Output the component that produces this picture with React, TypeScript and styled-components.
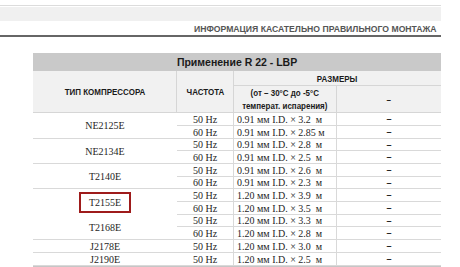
import styled, { createGlobalStyle } from 'styled-components';

const GlobalStyle = createGlobalStyle`
  body {
    margin: 0;
    background: #ffffff;
  }
`;

interface Item {
  freq: string;
  size: string;
}

interface Group {
  model: string;
  items: Item[];
  marked?: boolean;
  open?: boolean;
}

const groups: Group[] = [
  {
    model: 'NE2125E',
    items: [
      { freq: '50 Hz', size: '0.91 мм I.D. × 3.2  м' },
      { freq: '60 Hz', size: '0.91 мм I.D. × 2.85 м' }
    ]
  },
  {
    model: 'NE2134E',
    items: [
      { freq: '50 Hz', size: '0.91 мм I.D. × 2.8  м' },
      { freq: '60 Hz', size: '0.91 мм I.D. × 2.5  м' }
    ]
  },
  {
    model: 'T2140E',
    items: [
      { freq: '50 Hz', size: '0.91 мм I.D. × 2.6  м' },
      { freq: '60 Hz', size: '0.91 мм I.D. × 2.3  м' }
    ]
  },
  {
    model: 'T2155E',
    marked: true,
    open: true,
    items: [
      { freq: '50 Hz', size: '1.20 мм I.D. × 3.9  м' },
      { freq: '60 Hz', size: '1.20 мм I.D. × 3.5  м' }
    ]
  },
  {
    model: 'T2168E',
    items: [
      { freq: '50 Hz', size: '1.20 мм I.D. × 3.3  м' },
      { freq: '60 Hz', size: '1.20 мм I.D. × 2.8  м' }
    ]
  },
  {
    model: 'J2178E',
    items: [{ freq: '50 Hz', size: '1.20 мм I.D. × 3.0  м' }]
  },
  {
    model: 'J2190E',
    items: [{ freq: '50 Hz', size: '1.20 мм I.D. × 2.5  м' }]
  }
];

// row heights that add up to the 153px body of the reference
const rowHeights = [13, 13, 12, 13, 13, 12, 13, 13, 12, 13, 13, 13];

function App() {
  let rowIndex = 0;

  return (
    <Page>
      <GlobalStyle />
      <TopRule />
      <TopBand />
      <SectionHeading>
        <HeadingText>ИНФОРМАЦИЯ КАСАТЕЛЬНО ПРАВИЛЬНОГО МОНТАЖА</HeadingText>
      </SectionHeading>
      <Table>
        <colgroup>
          <col style={{ width: 144 }} />
          <col style={{ width: 57 }} />
          <col style={{ width: 103 }} />
          <col style={{ width: 104 }} />
        </colgroup>
        <thead>
          <tr>
            <TitleCell colSpan={4}>Применение R 22 - LBP</TitleCell>
          </tr>
          <tr>
            <HeadCell rowSpan={2} $divider>
              <HeadLabel>ТИП КОМПРЕССОРА</HeadLabel>
            </HeadCell>
            <HeadCell rowSpan={2} $divider>
              <HeadLabel>ЧАСТОТА</HeadLabel>
            </HeadCell>
            <HeadCell colSpan={2} $short>
              <HeadLabel>РАЗМЕРЫ</HeadLabel>
            </HeadCell>
          </tr>
          <tr>
            <HeadCell $divider>
              <HeadLabel>
                (от – 30°C до -5°C
                <br />
                температ. испарения)
              </HeadLabel>
            </HeadCell>
            <HeadCell>
              <HeadLabel>–</HeadLabel>
            </HeadCell>
          </tr>
        </thead>
        <tbody>
          {groups.map((group) =>
            group.items.map((item, i) => {
              const height = rowHeights[rowIndex++];
              return (
                <tr key={group.model + item.freq} style={{ height }}>
                  {i === 0 && (
                    <ModelCell rowSpan={group.items.length} $open={group.open}>
                      {group.marked ? <Marked>{group.model}</Marked> : group.model}
                    </ModelCell>
                  )}
                  <FreqCell>{item.freq}</FreqCell>
                  <SizeCell>{item.size}</SizeCell>
                  <DashCell>–</DashCell>
                </tr>
              );
            })
          )}
        </tbody>
      </Table>
    </Page>
  );
}

const Page = styled.div`
  width: 441px;
  padding-top: 5px;
`;

const TopRule = styled.div`
  height: 1px;
  background: #dcdcdc;
`;

const TopBand = styled.div`
  height: 14px;
  margin-top: 1px;
  background: #f0f0f0;
`;

const SectionHeading = styled.div`
  height: 14px;
  display: flex;
  align-items: flex-end;
  justify-content: flex-end;
  padding-right: 4px;
  border-bottom: 2px solid #666666;
`;

// the source uses a narrow face; squeeze the regular one to the same width
const HeadingText = styled.span`
  display: inline-block;
  font-family: 'Liberation Sans', Arial, sans-serif;
  font-weight: 700;
  font-size: 9.6px;
  line-height: 12px;
  color: #555555;
  white-space: nowrap;
  transform: scaleX(0.9);
  transform-origin: right center;
`;

const Table = styled.table`
  margin: 16px 0 0 33px;
  width: 408px;
  table-layout: fixed;
  border-collapse: separate;
  border-spacing: 0;
  border-bottom: 2px solid #c6c6c6;
  font-family: 'Liberation Serif', 'Times New Roman', serif;
  font-size: 10px;
  color: #1e1e1e;

  td,
  th {
    padding: 0;
  }
`;

const TitleCell = styled.th`
  height: 18px;
  background: #c9c9c9;
  font-family: 'Liberation Sans', Arial, sans-serif;
  font-weight: 700;
  font-size: 10.5px;
  color: #1a1a1a;
  text-align: center;
  vertical-align: middle;
`;

const HeadCell = styled.th<{ $divider?: boolean; $short?: boolean }>`
  height: ${({ $short }) => ($short ? '14px' : 'auto')};
  background: #f1f1f1;
  text-align: center;
  vertical-align: middle;
  border-bottom: 1px solid #d6d6d6;
  border-right: ${({ $divider }) => ($divider ? '1px solid #d6d6d6' : 'none')};
`;

const HeadLabel = styled.span`
  display: inline-block;
  font-family: 'Liberation Sans', Arial, sans-serif;
  font-weight: 700;
  font-size: 9.5px;
  line-height: 13px;
  color: #1a1a1a;
  white-space: nowrap;
  transform: scaleX(0.84);
`;

const ModelCell = styled.td<{ $open?: boolean }>`
  text-align: center;
  vertical-align: middle;
  border-bottom: ${({ $open }) => ($open ? 'none' : '1px solid #d9d9d9')};
`;

const Marked = styled.span`
  display: inline-block;
  padding: 3px 8px;
  border: 2px solid #9e1b1b;
  line-height: 11px;
`;

const FreqCell = styled.td`
  text-align: center;
  border-bottom: 1px solid #d9d9d9;
  border-right: 1px solid #d9d9d9;
`;

const SizeCell = styled.td`
  padding-left: 3px !important;
  white-space: pre;
  border-bottom: 1px solid #d9d9d9;
  border-right: 1px solid #d9d9d9;
`;

const DashCell = styled.td`
  text-align: center;
  font-family: 'Liberation Sans', Arial, sans-serif;
  font-weight: 700;
  font-size: 9px;
  border-bottom: 1px solid #d9d9d9;
`;

export default App;
